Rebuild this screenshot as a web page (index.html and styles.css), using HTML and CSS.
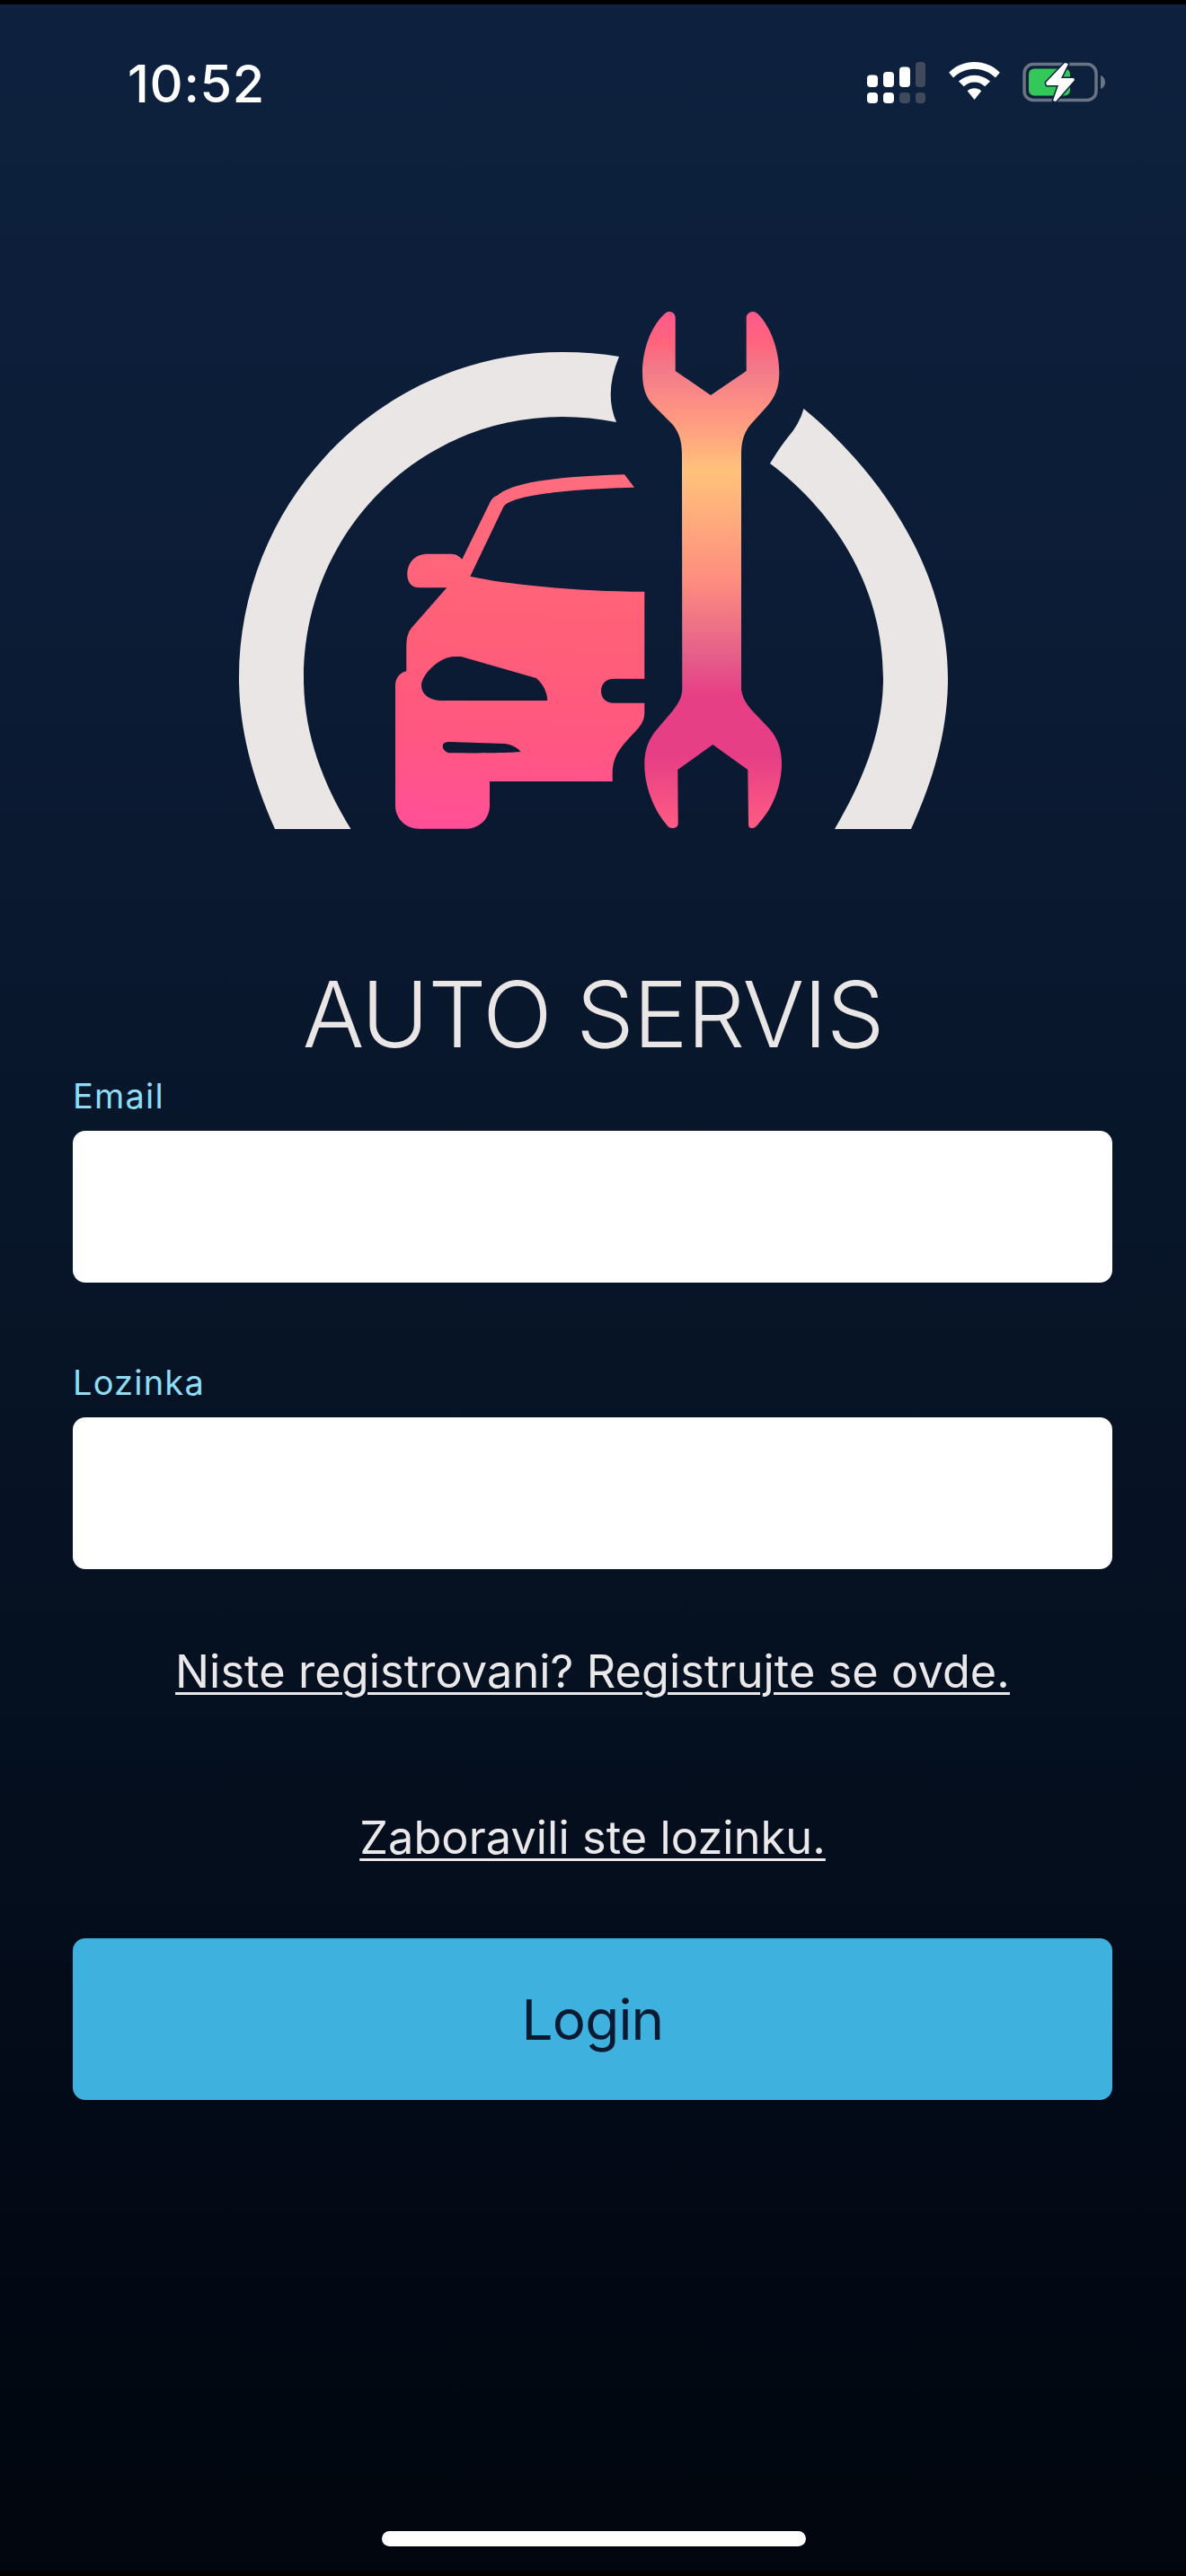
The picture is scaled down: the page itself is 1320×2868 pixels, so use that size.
FILE: index.html
```html
<!DOCTYPE html>
<html lang="sr">
<head>
<meta charset="utf-8">
<title>Auto Servis</title>
<link rel="stylesheet" href="styles.css">
</head>
<body>
<main class="screen">
  <header class="status">
    <span class="time">10:52</span>
    <div class="status-icons">
      <svg class="ic-signal" width="66" height="46" viewBox="0 0 66 46">
        <g fill="#fff">
          <rect x="0" y="14.500" width="12" height="13.500" rx="4"/>
          <rect x="18" y="11" width="12" height="17" rx="4"/>
          <rect x="36" y="5.500" width="12" height="22.500" rx="4"/>
          <rect x="0" y="34" width="12" height="12" rx="4"/>
          <rect x="18" y="34" width="12" height="12" rx="4"/>
        </g>
        <g fill="#3f4a5c">
          <rect x="54" y="0" width="11" height="28" rx="4"/>
          <rect x="36" y="34" width="12" height="12" rx="4"/>
          <rect x="54" y="34" width="11" height="12" rx="4"/>
        </g>
      </svg>
      <svg class="ic-wifi" width="57" height="42" viewBox="0 0 58 43">
        <path fill="#fff" d="M29 0C18 0 8 4 0 12l5 6c6-6 15-10 24-10s18 4 24 10l5-6C50 4 40 0 29 0z"/>
        <path fill="#fff" d="M29 15c-7 0-13 3-18 7l6 6c3-3 7-5 12-5s9 2 12 5l6-6c-5-4-11-7-18-7z"/>
        <path fill="#fff" d="M29 30c-3 0-6 1-8 3l8 10 8-10c-2-2-5-3-8-3z"/>
      </svg>
      <svg class="ic-batt" width="93" height="45" viewBox="0 0 93 45">
        <rect x="2" y="2.500" width="80" height="40" rx="10" fill="none" stroke="#6b7483" stroke-width="3.500"/>
        <path d="M87 15c3 1 5 4 5 7.500s-2 6.500-5 7.500z" fill="#6b7483"/>
        <rect x="7" y="7.500" width="46" height="30" rx="6" fill="#34c759"/>
        <path d="M47 1 26 23 27 26H40L34 43 37 44 58 20 57 18H43L51 2z" fill="#fff" stroke="#0d2140" stroke-width="3" stroke-linejoin="round" paint-order="stroke"/>
      </svg>
    </div>
  </header>

  <svg class="logo" width="840" height="620" viewBox="240 320 840 620">
    <defs>
      <linearGradient id="carG" gradientUnits="userSpaceOnUse" x1="590" y1="528" x2="570" y2="923">
        <stop offset="0" stop-color="#ff6d7e"/>
        <stop offset="0.45" stop-color="#ff5f78"/>
        <stop offset="0.75" stop-color="#ff5781"/>
        <stop offset="1" stop-color="#ff5097"/>
      </linearGradient>
      <linearGradient id="wrG" gradientUnits="userSpaceOnUse" x1="0" y1="347" x2="0" y2="923">
        <stop offset="0" stop-color="#ff5a8c"/>
        <stop offset="0.06" stop-color="#ff647c"/>
        <stop offset="0.11" stop-color="#f2798a"/>
        <stop offset="0.2" stop-color="#ff9682"/>
        <stop offset="0.31" stop-color="#ffc27a"/>
        <stop offset="0.52" stop-color="#fd8d7f"/>
        <stop offset="0.66" stop-color="#e5608a"/>
        <stop offset="0.74" stop-color="#e73f85"/>
        <stop offset="0.86" stop-color="#e73f85"/>
        <stop offset="1" stop-color="#ff5c84"/>
      </linearGradient>
    </defs>
    <path class="arc" d="M306 923C278 860 266 805 266 755C266 555 427 392 626 392Q660 392 689 397Q672 438 686 470Q656 464 626 464C465 464 338 594 338 755C338 815 358 870 390.500 923Z"/>
    <path class="arc" d="M894.500 455C985 530 1055 640 1055 755C1055 815 1038 870 1014 923H929C960 870 983 815 983 755C983 660 935 575 857 516Q868 498 876 488Q890 472 894.500 455Z"/>
    <path fill="url(#carG)" fill-rule="evenodd" d="M695 528.300L706 542.700C670 543.500 590 547 566.700 559.300Q561 562 560 565L523.300 641.700C560 650 640 658.700 717.300 658.700V755.700H683.300C674 755.700 669 762 669 769.300C669 777 674 782.700 683.300 782.700H717.300V793C717.300 800 715 805 711 810C700 822 690 832 685.500 842Q681.700 851 681.700 860V870H545V896.700C545 912 533 922.700 518.300 922.700H466.700C451 922.700 440 911 440 896.700V763.300C440 755 445 749 452.300 747.300V720C452.300 708 455 702 460 696.700L497.300 654.300H466.700C458 654.300 453.300 648 453.300 640C453.300 626 462 616.700 476 616.700H501.700C507 616.700 511 619 514.300 622.700L545 560C548 554 550 553 553.300 551.700C570 538 610 531 695 528.300ZM513.300 731L596.700 755C604 761 609 770 609.300 780H491.700C478 780 469 773 469 763.300C469 752 488 731 506 731ZM493.300 828.300C495 826 499 826 503 826L562 828C570 829 577 833 579.300 837C565 838.500 525 838.500 500 838.300C496 838 491 833 493.300 828.300Z"/>
    <path fill="url(#wrG)" d="M745 347C749 347 751.700 350 751.700 354V413L791 440L830.700 413V354C830.700 350 834 347 838 347C841 347 843 349 845 351C858 365 867.300 390 867.300 415C867.300 432 862 443 854 452L836 472C829 480 825 490 825 506V767C826 776 830 783 837 791L856 811C866 822 870 835 870 850C870 875 860 900 845 916C842 920 840 922 837 922C834 922 833 920 833 917L832.300 857L793.300 829L754.300 857L754.700 917C754.700 920 752 922 748.300 922C745 922 743 920 741 917C727 900 717.300 875 717.300 850C717.300 835 722 822 732 811L749 791C755 783 759.300 776 759.300 767L759 506C759 490 755 480 748 472L727 451C719 443 715 432 715 415C715 390 724 365 738 351C740 349 742 347 745 347Z"/>
  </svg>

  <h1 class="brand">AUTO SERVIS</h1>

  <form class="form">
    <label class="field">
      <span class="field-label">Email</span>
      <input class="input" type="text">
    </label>
    <label class="field field-second">
      <span class="field-label">Lozinka</span>
      <input class="input" type="password">
    </label>
    <a class="link link-first" href="#">Niste registrovani? Registrujte se ovde.</a>
    <a class="link link-second" href="#">Zaboravili ste lozinku.</a>
    <button class="login" type="button">Login</button>
  </form>

  <div class="home"></div>
</main>
</body>
</html>
```
FILE: styles.css
```css
* { box-sizing: border-box; }
html, body { margin: 0; padding: 0; background: #000; }
.screen {
  position: relative;
  width: 1320px;
  height: 2868px;
  padding-top: 5px;
  display: flex;
  flex-direction: column;
  background: linear-gradient(180deg, #000 0, #000 5px, #0d213e 5px, #0c1c36 630px, #09182e 1060px, #071426 1500px, #051020 1900px, #030a17 2350px, #01060e 2862px, #000 2862px);
  font-family: Inter, "Liberation Sans", sans-serif;
  overflow: hidden;
}
.status {
  height: 126px;
  padding: 60px 89px 0 142px;
  display: flex;
  justify-content: space-between;
  align-items: flex-start;
}
.time {
  font-size: 57.500px;
  line-height: 1;
  font-weight: 500;
  letter-spacing: 0.7px;
  color: #fff;
}
.status-icons {
  display: flex;
  align-items: flex-start;
  gap: 25px;
  padding-top: 4px;
}
.logo { display: block; align-self: center; margin-top: 189px; flex: none; }
.arc { fill: #ebe6e6; }
.brand {
  margin: 138px 0 0;
  text-align: center;
  font-size: 102px;
  line-height: 1;
  font-weight: 320;
  letter-spacing: -1px;
  color: #ebe6e6;
}
.form {
  padding: 0 82px 0 81px;
  display: flex;
  flex-direction: column;
}
.field { display: flex; flex-direction: column; }
.field-label {
  font-size: 38px;
  line-height: 46px;
  letter-spacing: 1.2px;
  color: #8fdcf7;
  margin-top: 17px;
  margin-bottom: 16px;
}
.field-second { margin-top: 71px; }
.input {
  display: block;
  width: 100%;
  height: 169px;
  border: 0;
  border-radius: 14px;
  background: #fff;
}
.link {
  align-self: center;
  color: #ebe8ea;
  font-size: 50.400px;
  font-weight: 370;
  letter-spacing: 0.1px;
  line-height: 60px;
  text-decoration: underline;
  text-decoration-thickness: 3px;
  text-underline-offset: 5px;
}
.link-first { margin-top: 84px; }
.link-second { margin-top: 125px; }
.login {
  margin-top: 82px;
  height: 180px;
  border: 0;
  border-radius: 14px;
  background: #3eb1de;
  color: #0a1a33;
  font: 380 62px Inter, "Liberation Sans", sans-serif;
  letter-spacing: -0.8px;
}
.home {
  position: absolute;
  left: 425px;
  top: 2818px;
  width: 472px;
  height: 17px;
  border-radius: 8.500px;
  background: #fff;
}
```
